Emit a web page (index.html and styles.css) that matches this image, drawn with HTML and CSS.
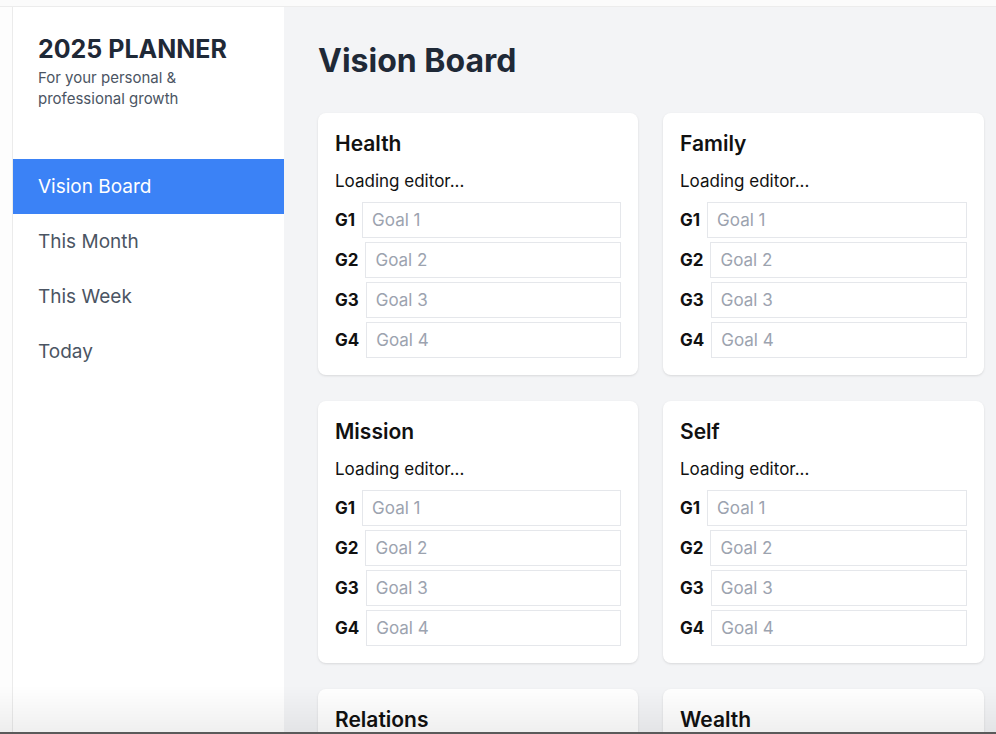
FILE: index.html
```html
<!DOCTYPE html>
<html lang="en">
<head>
<meta charset="utf-8">
<title>2025 Planner</title>
<link rel="stylesheet" href="styles.css">
</head>
<body>
<div class="topstrip"></div>
<div class="frame">
  <div class="gutter"></div>
  <aside class="sidebar">
    <div class="brand">
      <h2 class="brand-title">2025 PLANNER</h2>
      <p class="brand-sub">For your personal &amp;<br>professional growth</p>
    </div>
    <nav class="nav">
      <a class="nav-item active">Vision Board</a>
      <a class="nav-item">This Month</a>
      <a class="nav-item">This Week</a>
      <a class="nav-item">Today</a>
    </nav>
  </aside>
  <main class="main">
    <h1 class="page-title">Vision Board</h1>
    <div class="grid">
      <section class="card">
        <h3 class="card-title">Health</h3>
        <div class="loading">Loading editor...</div>
        <div class="goals">
          <div class="goal"><span class="g">G1</span><input class="goal-input" placeholder="Goal 1"></div>
          <div class="goal"><span class="g">G2</span><input class="goal-input" placeholder="Goal 2"></div>
          <div class="goal"><span class="g">G3</span><input class="goal-input" placeholder="Goal 3"></div>
          <div class="goal"><span class="g">G4</span><input class="goal-input" placeholder="Goal 4"></div>
        </div>
      </section>
      <section class="card">
        <h3 class="card-title">Family</h3>
        <div class="loading">Loading editor...</div>
        <div class="goals">
          <div class="goal"><span class="g">G1</span><input class="goal-input" placeholder="Goal 1"></div>
          <div class="goal"><span class="g">G2</span><input class="goal-input" placeholder="Goal 2"></div>
          <div class="goal"><span class="g">G3</span><input class="goal-input" placeholder="Goal 3"></div>
          <div class="goal"><span class="g">G4</span><input class="goal-input" placeholder="Goal 4"></div>
        </div>
      </section>
      <section class="card">
        <h3 class="card-title">Mission</h3>
        <div class="loading">Loading editor...</div>
        <div class="goals">
          <div class="goal"><span class="g">G1</span><input class="goal-input" placeholder="Goal 1"></div>
          <div class="goal"><span class="g">G2</span><input class="goal-input" placeholder="Goal 2"></div>
          <div class="goal"><span class="g">G3</span><input class="goal-input" placeholder="Goal 3"></div>
          <div class="goal"><span class="g">G4</span><input class="goal-input" placeholder="Goal 4"></div>
        </div>
      </section>
      <section class="card">
        <h3 class="card-title">Self</h3>
        <div class="loading">Loading editor...</div>
        <div class="goals">
          <div class="goal"><span class="g">G1</span><input class="goal-input" placeholder="Goal 1"></div>
          <div class="goal"><span class="g">G2</span><input class="goal-input" placeholder="Goal 2"></div>
          <div class="goal"><span class="g">G3</span><input class="goal-input" placeholder="Goal 3"></div>
          <div class="goal"><span class="g">G4</span><input class="goal-input" placeholder="Goal 4"></div>
        </div>
      </section>
      <section class="card">
        <h3 class="card-title">Relations</h3>
        <div class="loading">Loading editor...</div>
        <div class="goals">
          <div class="goal"><span class="g">G1</span><input class="goal-input" placeholder="Goal 1"></div>
          <div class="goal"><span class="g">G2</span><input class="goal-input" placeholder="Goal 2"></div>
          <div class="goal"><span class="g">G3</span><input class="goal-input" placeholder="Goal 3"></div>
          <div class="goal"><span class="g">G4</span><input class="goal-input" placeholder="Goal 4"></div>
        </div>
      </section>
      <section class="card">
        <h3 class="card-title">Wealth</h3>
        <div class="loading">Loading editor...</div>
        <div class="goals">
          <div class="goal"><span class="g">G1</span><input class="goal-input" placeholder="Goal 1"></div>
          <div class="goal"><span class="g">G2</span><input class="goal-input" placeholder="Goal 2"></div>
          <div class="goal"><span class="g">G3</span><input class="goal-input" placeholder="Goal 3"></div>
          <div class="goal"><span class="g">G4</span><input class="goal-input" placeholder="Goal 4"></div>
        </div>
      </section>
    </div>
  </main>
</div>
<div class="bottom-shade"></div>
</body>
</html>
```
FILE: styles.css
```css
* { box-sizing: border-box; }
html, body { margin: 0; padding: 0; height: 100%; overflow: hidden; }
body {
  font-family: Inter, "Noto Sans", "Liberation Sans", sans-serif;
  background: #f3f4f6;
  color: #111827;
}
.topstrip {
  height: 7px;
  background: #fbfbfb;
  border-bottom: 1px solid #ececec;
}
.frame {
  display: flex;
  height: calc(100% - 7px);
}
.gutter {
  width: 13px;
  flex: none;
  background: #fdfdfd;
  border-right: 1px solid #ebebeb;
}
.sidebar {
  width: 271px;
  flex: none;
  background: #ffffff;
}
.brand {
  padding: 26px 25px 0 25px;
}
.brand-title {
  margin: 0;
  font-size: 25px;
  line-height: 32px;
  font-weight: 700;
  color: #1f2937;
}
.brand-sub {
  margin: 2px 0 0 0;
  font-size: 15px;
  line-height: 21px;
  color: #4b5563;
}
.nav {
  margin-top: 50px;
  display: flex;
  flex-direction: column;
}
.nav-item {
  display: block;
  height: 55px;
  line-height: 55px;
  padding-left: 25px;
  font-size: 19px;
  color: #4b5563;
}
.nav-item.active {
  background: #3b82f6;
  color: #ffffff;
}
.main {
  flex: 1;
  padding: 34px 12px 0 34px;
  background: #f3f4f6;
}
.page-title {
  margin: 0 0 32px 0;
  font-size: 32px;
  line-height: 40px;
  font-weight: 700;
  color: #1f2937;
}
.grid {
  display: grid;
  grid-template-columns: 320px 321px;
  column-gap: 25px;
  row-gap: 26px;
}
.card {
  background: #ffffff;
  border-radius: 8px;
  box-shadow: 0 1px 3px rgba(0,0,0,0.08), 0 1px 2px rgba(0,0,0,0.04);
  padding: 17px 17px 17px 17px;
}
.card-title {
  margin: 0 0 11px 0;
  font-size: 21px;
  line-height: 28px;
  font-weight: 600;
  color: #111111;
}
.loading {
  font-size: 17px;
  line-height: 24px;
  color: #111111;
  margin-bottom: 9px;
}
.goals {
  display: flex;
  flex-direction: column;
  gap: 4px;
}
.goal {
  display: flex;
  align-items: center;
  gap: 7px;
}
.g {
  font-size: 17px;
  font-weight: 700;
  color: #111111;
}
.goal-input {
  flex: 1;
  min-width: 0;
  height: 36px;
  border: 1px solid #e5e7eb;
  border-radius: 0;
  padding: 0 9px;
  font-family: inherit;
  font-size: 17px;
  color: #111827;
  background: #ffffff;
  outline: none;
}
.goal-input::placeholder { color: #9ca3af; }
.bottom-shade {
  position: fixed;
  left: 0;
  right: 0;
  bottom: 0;
  height: 48px;
  background: linear-gradient(to bottom, rgba(0,0,0,0) 0%, rgba(0,0,0,0.06) 95%);
  border-bottom: 2px solid #5a5a5a;
  pointer-events: none;
}
```
